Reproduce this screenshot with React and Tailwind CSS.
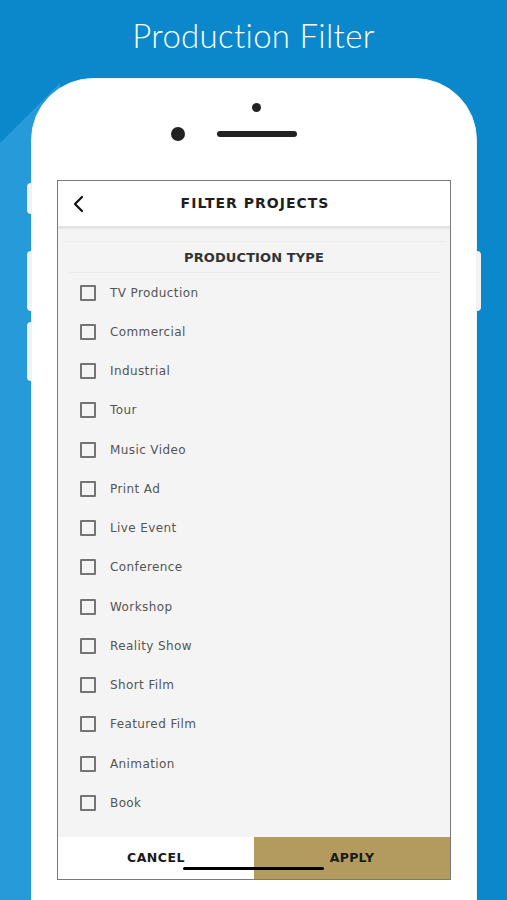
import React from "react";

const items = [
  "TV Production",
  "Commercial",
  "Industrial",
  "Tour",
  "Music Video",
  "Print Ad",
  "Live Event",
  "Conference",
  "Workshop",
  "Reality Show",
  "Short Film",
  "Featured Film",
  "Animation",
  "Book",
];

export default function App() {
  return (
    <div className="relative w-[507px] h-[900px] overflow-hidden bg-[#0a88cb]" style={{ fontFamily: "'DejaVu Sans', sans-serif" }}>
      {/* decorative lighter diagonal on the left */}
      <svg className="absolute left-0 top-0" width="507" height="900" viewBox="0 0 507 900">
        <polygon points="0,143 60,83 60,900 0,900" fill="#279bd9" />
      </svg>

      <div className="relative flex flex-col items-center">
        <div className="h-[78px] w-full flex items-center justify-center pb-[7px]">
          <h1 className="text-white text-[33px] font-light tracking-[0.3px]" style={{ fontFamily: "Lato, sans-serif" }}>
            Production Filter
          </h1>
        </div>

        {/* phone */}
        <div className="relative ml-[1px] w-[446px] h-[900px] bg-white rounded-t-[62px] border border-[#eef2f4]">
          {/* side buttons */}
          <div className="absolute -left-[5px] top-[104px] w-[4px] h-[31px] bg-[#f1f3f4] rounded-l-sm" />
          <div className="absolute -left-[5px] top-[172px] w-[4px] h-[60px] bg-[#f1f3f4] rounded-l-sm" />
          <div className="absolute -left-[5px] top-[243px] w-[4px] h-[59px] bg-[#f1f3f4] rounded-l-sm" />
          <div className="absolute -right-[5px] top-[172px] w-[4px] h-[60px] bg-[#f1f3f4] rounded-r-sm" />

          {/* top sensors */}
          <div className="absolute left-[220px] top-[24px] w-[9px] h-[9px] rounded-full bg-[#222]" />
          <div className="absolute left-[139px] top-[48px] w-[14px] h-[14px] rounded-full bg-[#222]" />
          <div className="absolute left-[185px] top-[52px] w-[80px] h-[6px] rounded-full bg-[#222]" />

          {/* screen */}
          <div className="absolute left-[25px] top-[101px] w-[394px] h-[700px] border border-[#7a7a7a] bg-[#f4f4f4] flex flex-col overflow-hidden">
            <div className="h-[46px] bg-white flex items-center relative shadow-[0_1px_2px_rgba(0,0,0,0.12)] border-b border-[#e4e4e4]">
              <svg className="absolute left-[14px] top-[14px]" width="14" height="18" viewBox="0 0 14 18">
                <path d="M10 2 L3 9 L10 16" fill="none" stroke="#111" strokeWidth="2.2" strokeLinecap="round" strokeLinejoin="round" />
              </svg>
              <div className="w-full text-center text-[14px] font-bold tracking-[1px] text-[#1e1e1e] pl-[2px]">
                FILTER PROJECTS
              </div>
            </div>
            <div className="mt-[14px] mx-[5px] border-t border-[#ececec]" />
            <div className="h-[30px] flex items-center justify-center text-[13px] font-semibold tracking-[0.1px] text-[#333] pt-[1px]">
              PRODUCTION TYPE
            </div>
            <div className="mx-[10px] border-t border-[#ececec]" />
            <div className="flex flex-col">
              {items.map((t) => (
                <div key={t} className="h-[39.25px] flex items-center pl-[22px]">
                  <div className="w-[16px] h-[16px] border-[2px] border-[#747474] rounded-[1px] bg-transparent" />
                  <span className="ml-[14px] text-[12px] tracking-[0.4px] text-[#555]">{t}</span>
                </div>
              ))}
            </div>
            <div className="flex-1" />
            <div className="h-[42px] flex shrink-0 relative">
              <div className="w-1/2 bg-white flex items-center justify-center text-[12.5px] font-bold tracking-[0.5px] text-[#1a1a1a] pt-[1px]">
                CANCEL
              </div>
              <div className="w-1/2 bg-[#b39a5e] flex items-center justify-center text-[12.5px] font-bold tracking-[0.3px] text-[#1a1a1a] pt-[1px]">
                APPLY
              </div>
              <div className="absolute left-[125px] top-[30px] w-[141px] h-[3px] rounded-full bg-black" />
            </div>
          </div>
        </div>
      </div>
    </div>
  );
}
